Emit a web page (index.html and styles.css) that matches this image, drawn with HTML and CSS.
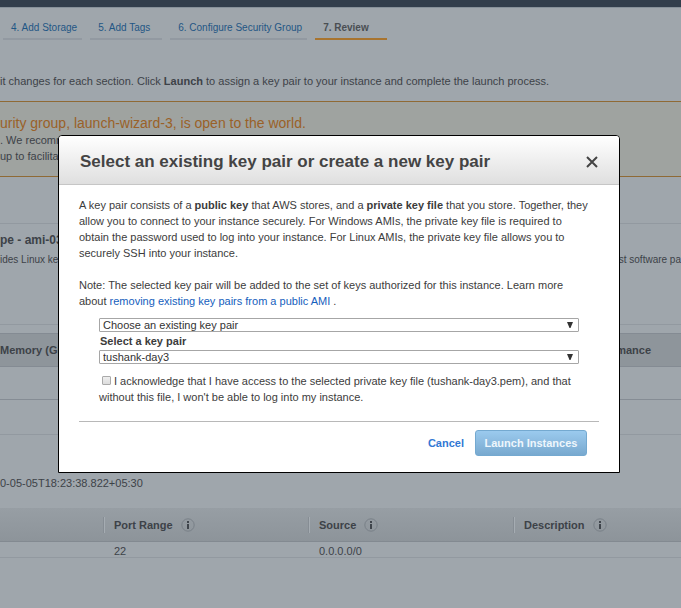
FILE: index.html
```
<!DOCTYPE html>
<html lang="en">
<head>
<meta charset="utf-8">
<title>Review Instance Launch</title>
<link rel="stylesheet" href="styles.css">
</head>
<body>
<svg class="defs" aria-hidden="true">
  <symbol id="info" viewBox="0 0 14 14">
    <circle cx="7" cy="7" r="6.2" fill="none" stroke="#798088" stroke-width="1"/>
    <path d="M6 3h2v2H6zM6 6h2v5H6z" fill="#3f454c"/>
  </symbol>
  <symbol id="arrow" viewBox="0 0 8 8">
    <path d="M1 1h6L4.5 7h-1z" fill="#333"/>
  </symbol>
</svg>
<div class="page">
  <header class="topbar"></header>
  <nav class="tabs">
    <a href="#" class="tab">4. Add Storage</a>
    <a href="#" class="tab">5. Add Tags</a>
    <a href="#" class="tab">6. Configure Security Group</a>
    <a href="#" class="tab active">7. Review</a>
  </nav>
  <p class="intro">it changes for each section. Click <b>Launch</b> to assign a key pair to your instance and complete the launch process.</p>
  <section class="alert">
    <h2>urity group, launch-wizard-3, is open to the world.</h2>
    <p>. We recomm</p>
    <p>up to facilitat</p>
  </section>
  <section class="ami">
    <h3>pe - ami-03</h3>
    <div class="ami-text"><span>ides Linux ke</span><span>st software pa</span></div>
  </section>
  <table class="types">
    <thead><tr><th>Memory (GiB)</th><th class="network">mance</th></tr></thead>
    <tbody><tr><td></td><td></td></tr></tbody>
  </table>
  <section class="group">
    <p>0-05-05T18:23:38.822+05:30</p>
  </section>
  <table class="rules">
    <thead>
      <tr>
        <th class="first"></th>
        <th class="mid"><div class="head">Port Range <svg class="info"><use href="#info"/></svg></div></th>
        <th class="mid"><div class="head">Source <svg class="info"><use href="#info"/></svg></div></th>
        <th><div class="head">Description <svg class="info"><use href="#info"/></svg></div></th>
      </tr>
    </thead>
    <tbody><tr><td></td><td>22</td><td>0.0.0.0/0</td><td></td></tr></tbody>
  </table>
</div>
<div class="overlay">
  <form class="dialog" role="dialog" aria-labelledby="title">
    <header class="dialog-head">
      <h1 id="title">Select an existing key pair or create a new key pair</h1>
      <button type="button" class="close" aria-label="Close"><svg viewBox="0 0 12 12"><path d="M1 1L11 11M11 1L1 11" stroke="#444" stroke-width="2"/></svg></button>
    </header>
    <div class="dialog-body">
      <p>A key pair consists of a <b>public key</b> that AWS stores, and a <b>private key file</b> that you store. Together, they<br>allow you to connect to your instance securely. For Windows AMIs, the private key file is required to<br>obtain the password used to log into your instance. For Linux AMIs, the private key file allows you to<br>securely SSH into your instance.</p>
      <p>Note: The selected key pair will be added to the set of keys authorized for this instance. Learn more<br>about <a href="#">removing existing key pairs from a public AMI</a> .</p>
      <div class="fields">
        <div class="select"><select aria-label="Key pair option"><option>Choose an existing key pair</option></select><svg><use href="#arrow"/></svg></div>
        <label class="caption" for="key">Select a key pair</label>
        <div class="select"><select id="key"><option>tushank-day3</option></select><svg><use href="#arrow"/></svg></div>
        <label class="ack"><input type="checkbox">I acknowledge that I have access to the selected private key file (tushank-day3.pem), and that<br>without this file, I won't be able to log into my instance.</label>
      </div>
      <footer class="actions">
        <a href="#" class="cancel">Cancel</a>
        <button type="submit" class="launch">Launch Instances</button>
      </footer>
    </div>
  </form>
</div>
</body>
</html>
```

FILE: styles.css
```
* { box-sizing: border-box; }
body {
  margin: 0;
  background: #9fa6ac;
  color: #3d4248;
  font: 11px/16px "Liberation Sans", Arial, sans-serif;
}
h1, h2, h3, p { margin: 0; }
a { text-decoration: none; }
.defs { position: absolute; width: 0; height: 0; }
.page { min-height: 100vh; overflow: hidden; }
.topbar { height: 8px; background: #323e4c; border-bottom: 1px solid #87919a; }
.tabs { display: flex; gap: 8px; padding: 12px 3px 0; font-size: 10px; }
.tab {
  min-width: 72px;
  padding: 0 5px 2px 8px;
  border-bottom: 2px solid #9299a1;
  color: #1f5685;
}
.tab.active { color: #4a4e53; font-weight: bold; border-color: #a8742f; }
.intro { padding: 33px 0 12px; white-space: nowrap; }
.alert {
  height: 76px;
  padding: 12px 0;
  background: #9fa3a0;
  border: solid #8f6a35;
  border-width: 1px 0;
}
.alert h2 { font-size: 14px; line-height: 18px; font-weight: normal; color: #9a6128; }
.ami {
  margin-top: 46px;
  height: 102px;
  padding-top: 8px;
  border: solid #9299a0;
  border-width: 1px 0;
}
.ami h3 { font-size: 12px; }
.ami-text { display: flex; justify-content: space-between; padding-top: 4px; font-size: 10px; }
table { width: 100%; border-collapse: separate; border-spacing: 0; }
th, td { padding: 0; text-align: left; }
.types { margin-top: 8px; border-bottom: 1px solid #858c94; }
.types th {
  height: 34px;
  background: #8e959b;
  border: solid #848b93;
  border-width: 1px 0;
}
.types .network { text-align: right; padding-right: 30px; }
.types td { height: 32px; }
.group { margin-top: 34px; padding: 40px 0 17px; border-top: 1px solid #9299a0; }
.rules { table-layout: fixed; }
.rules th {
  height: 34px;
  background: linear-gradient(#979ea4, #8d949a);
  border-bottom: 1px solid #838a91;
}
.rules .first { width: 104px; }
.rules .mid { width: 205px; }
.head {
  display: flex;
  align-items: center;
  gap: 8px;
  padding-left: 9px;
  border-left: 1px solid #a5acb2;
  box-shadow: -1px 0 #868d94;
}
.info { width: 14px; height: 14px; }
.rules td { height: 16px; padding: 4px 0 0 10px; line-height: 11px; border-bottom: 1px solid #9299a0; }
.overlay {
  position: fixed;
  inset: 0;
  display: flex;
  align-items: center;
  justify-content: center;
  padding-right: 3px;
}
.dialog {
  width: 562px;
  max-width: 100%;
  background: #fff;
  color: #3c3c3c;
  border: 1px solid #000;
  border-radius: 4px 4px 0 0;
}
.dialog-head {
  display: flex;
  align-items: center;
  justify-content: space-between;
  height: 49px;
  padding: 3px 21px 0;
  background: linear-gradient(#fff, #dfdfdf);
  border-bottom: 1px solid #c6c6c6;
  border-radius: 3px 3px 0 0;
}
h1 { font-size: 17px; color: #444; }
.close { display: flex; padding: 0; border: 0; background: none; }
.close svg { width: 12px; height: 12px; }
.dialog-body { padding: 12px 20px 16px; }
.dialog-body p { margin-bottom: 16px; white-space: nowrap; }
.dialog-body p + p { margin-bottom: 9px; }
.dialog-body a { color: #1560bd; }
.fields { padding: 0 20px; }
.select { position: relative; height: 14px; }
.select select {
  display: block;
  width: 100%;
  height: 14px;
  padding: 0 3px;
  border: 1px solid #a6a6a6;
  border-radius: 1px;
  background: #fff;
  color: #333;
  font: inherit;
  line-height: 12px;
  appearance: none;
}
.select svg { position: absolute; right: 5px; top: 3px; width: 8px; height: 8px; pointer-events: none; }
.caption { display: block; height: 18px; padding: 1px 1px 0; font-weight: bold; }
.ack { display: block; padding: 9px 0 16px; white-space: nowrap; }
.ack input {
  appearance: none;
  width: 9px;
  height: 9px;
  margin: 0 3px 0 3px;
  border: 1px solid #aaa;
  border-radius: 1px;
  background: linear-gradient(#eee, #ddd);
}
.actions {
  display: flex;
  align-items: center;
  justify-content: flex-end;
  gap: 11px;
  padding: 8px 12px 0;
  border-top: 1px solid #b8b8b8;
}
.dialog-body .cancel { color: #3278d4; font-weight: bold; }
.launch {
  width: 112px;
  height: 26px;
  padding: 0;
  border: 1px solid #74a9d0;
  border-radius: 3px;
  background: linear-gradient(#9bcaee, #78a9cf);
  color: #eef6fc;
  font: bold 11px/16px "Liberation Sans", Arial, sans-serif;
}
```
